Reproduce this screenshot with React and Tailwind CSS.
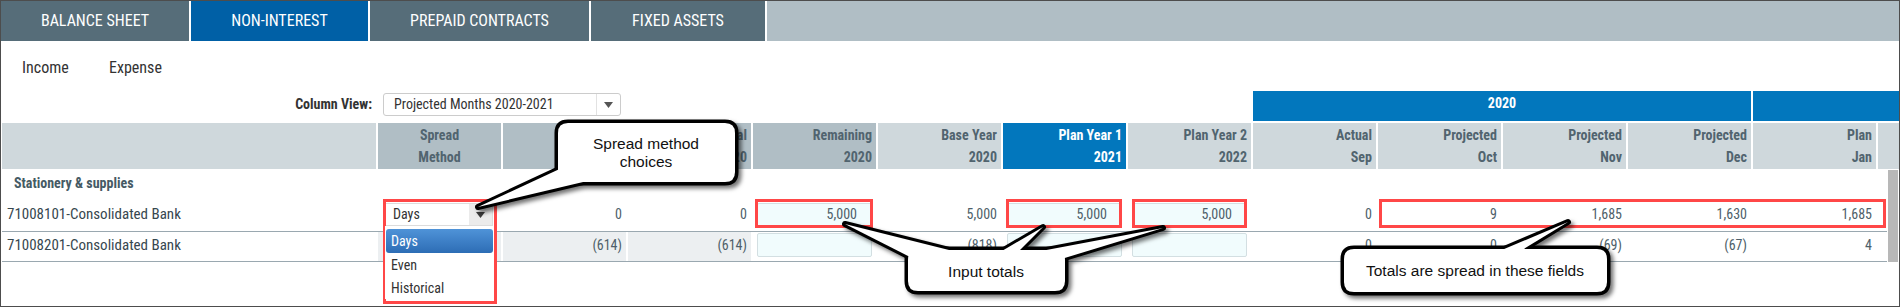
import React from 'react';

const DARK = 'bg-[#b0bec5]';
const LIGHT = 'bg-[#cfd8dc]';
const BLUE = 'bg-[#0277bd]';

const tabs = [
  { label: 'BALANCE SHEET', width: 'w-[188px]' },
  { label: 'NON-INTEREST', width: 'w-[177px]', active: true },
  { label: 'PREPAID CONTRACTS', width: 'w-[219px]' },
  { label: 'FIXED ASSETS', width: 'w-[174px]' },
];

const columns = [
  { key: 'spread', top: 'Spread', bottom: 'Method', bg: DARK, center: true },
  { key: 'budget', top: 'Budget', bottom: '2020', bg: DARK },
  { key: 'actual', top: 'Actual', bottom: '2020', bg: DARK },
  { key: 'remaining', top: 'Remaining', bottom: '2020', bg: DARK, input: true },
  { key: 'base', top: 'Base Year', bottom: '2020', bg: LIGHT },
  { key: 'py1', top: 'Plan Year 1', bottom: '2021', bg: BLUE, input: true },
  { key: 'py2', top: 'Plan Year 2', bottom: '2022', bg: LIGHT, input: true },
  { key: 'sep', top: 'Actual', bottom: 'Sep', bg: LIGHT },
  { key: 'oct', top: 'Projected', bottom: 'Oct', bg: LIGHT },
  { key: 'nov', top: 'Projected', bottom: 'Nov', bg: LIGHT },
  { key: 'dec', top: 'Projected', bottom: 'Dec', bg: LIGHT },
  { key: 'jan', top: 'Plan', bottom: 'Jan', bg: LIGHT },
  { key: 'feb', top: 'Plan', bottom: 'Feb', bg: LIGHT },
];

const rows = [
  {
    name: '71008101-Consolidated Bank',
    pad: 'pb-[2px]',
    height: 'h-[32px]',
    values: { budget: '0', actual: '0', remaining: '5,000', base: '5,000', py1: '5,000', py2: '5,000', sep: '0', oct: '9', nov: '1,685', dec: '1,630', jan: '1,685' },
  },
  {
    name: '71008201-Consolidated Bank',
    pad: 'pb-[3px]',
    height: 'h-[30px]',
    shaded: true,
    values: { budget: '(614)', actual: '(614)', remaining: '', base: '(818)', py1: '', py2: '', sep: '0', oct: '0', nov: '(69)', dec: '(67)', jan: '4' },
  },
];

const bubbles = [
  {
    rect: [558, 123, 177, 59],
    tails: [[[478, 207], [566, 166], [600, 178]]],
    lines: ['Spread method', 'choices'],
    cx: 646,
    ys: [149, 167],
  },
  {
    rect: [908, 250, 157, 41],
    tails: [
      [[845, 224], [912, 258], [965, 254]],
      [[1043, 227], [990, 258], [1012, 258]],
      [[1163, 228], [1020, 255], [1045, 264]],
    ],
    lines: ['Input totals'],
    cx: 986,
    ys: [277],
  },
  {
    rect: [1344, 249, 263, 43],
    tails: [[[1568, 222], [1483, 258], [1509, 258]]],
    lines: ['Totals are spread in these fields'],
    cx: 1475,
    ys: [276],
  },
];

const redBoxes = [
  [384.5, 200.5, 111, 102],
  [756.5, 200.5, 115, 26],
  [1007.5, 200.5, 113, 26],
  [1133.5, 200.5, 112, 26],
  [1380.5, 200.5, 504, 26],
];

const Caret = ({ color = '#3c3c3c' }) => (
  <svg width="9" height="6" viewBox="0 0 9 6">
    <path d="M0 0h9L4.5 6z" fill={color} />
  </svg>
);

const roundRect = ([x, y, w, h], r = 10) =>
  `M${x + r} ${y}H${x + w - r}Q${x + w} ${y} ${x + w} ${y + r}V${y + h - r}Q${x + w} ${y + h} ${x + w - r} ${y + h}H${x + r}Q${x} ${y + h} ${x} ${y + h - r}V${y + r}Q${x} ${y} ${x + r} ${y}Z`;

const tri = (pts) => `M${pts.map((p) => p.join(' ')).join('L')}Z`;

const SpreadSelect = () => (
  <div className="relative ml-[7px] w-[108px] h-[23px] flex bg-white border border-[#dcdcdc]">
    <span className="flex-1 pl-[7px] flex items-center text-[#333]">Days</span>
    <span className="w-[23px] bg-[#ebebeb] flex items-center justify-center">
      <Caret />
    </span>
    <div className="absolute left-[-1px] top-[22px] w-[109px] bg-white pt-[3px] px-px z-10">
      <div className="h-[24px] rounded-[3px] bg-linear-to-b from-[#4f93d8] to-[#2d6db5] text-white flex items-center pl-[5px]">Days</div>
      <div className="h-[24px] flex items-center pl-[5px] text-[#333]">Even</div>
      <div className="h-[22px] flex items-center pl-[5px] text-[#333]">Historical</div>
    </div>
  </div>
);

const BodyCell = ({ col, row, first }) => {
  const value = row.values[col.key];
  const shaded = row.shaded && ['spread', 'budget', 'actual'].includes(col.key);
  const base = `w-[123px] shrink-0 flex items-center ${row.pad} ${shaded ? 'bg-[#eceff1]' : ''}`;

  if (col.key === 'spread') {
    return <div className={base}>{first && <SpreadSelect />}</div>;
  }
  if (col.input) {
    return (
      <div className={`${base} px-1`}>
        <div className="h-[24px] w-full bg-[#f1fcfd] border border-[#d3dfe2] rounded-[2px] flex items-center justify-end pr-[14px]">
          {value}
        </div>
      </div>
    );
  }
  return <div className={`${base} justify-end pr-1`}>{value}</div>;
};

export default function App() {
  return (
    <div className="relative w-[1900px] h-[307px] bg-white overflow-hidden font-['Roboto_Condensed',Roboto,Arial,sans-serif] text-[14px]">
      <div className="w-full h-full border border-[#4d4d4d] flex flex-col overflow-hidden">
        {/* tabs */}
        <div className="flex gap-[2px] h-[40px] shrink-0">
          {tabs.map((tab) => (
            <div
              key={tab.label}
              className={`${tab.width} shrink-0 flex items-center justify-center text-white text-[16px] ${tab.active ? 'bg-[#0060a6]' : 'bg-[#566d79]'}`}
            >
              {tab.label}
            </div>
          ))}
          <div className="flex-1 bg-[#b0bec5]" />
        </div>

        {/* income / expense */}
        <div className="h-[50px] pt-1 flex items-center pl-[21px] text-[16px] text-[#333] shrink-0">
          <span className="w-[87px]">Income</span>
          <span>Expense</span>
        </div>

        {/* column view + year groups */}
        <div className="flex gap-[2px] pl-px h-[30px] shrink-0">
          <div className="w-[1249px] shrink-0 flex items-start pt-[2px]">
            <div className="w-[370px] text-right font-bold leading-[23px] text-[#333]">Column View:</div>
            <div className="ml-[11px] w-[238px] h-[23px] border border-[#cccccc] rounded-[3px] flex bg-white">
              <span className="flex-1 pl-[10px] flex items-center text-[#333]">Projected Months 2020-2021</span>
              <span className="w-[24px] border-l border-[#e2e2e2] flex items-center justify-center">
                <Caret color="#555" />
              </span>
            </div>
          </div>
          <div className={`w-[498px] shrink-0 ${BLUE} text-white font-bold text-center pt-[2px] leading-[20px]`}>2020</div>
          <div className={`flex-1 ${BLUE}`} />
        </div>

        {/* column headers */}
        <div className="flex gap-[2px] pl-px mt-[2px] h-[46px] shrink-0">
          <div className={`w-[374px] shrink-0 ${LIGHT}`} />
          {columns.map((col) => (
            <div
              key={col.key}
              className={`w-[123px] shrink-0 ${col.bg} pt-px leading-[22px] font-bold ${col.center ? 'text-center' : 'text-right pr-1'} ${col.bg === BLUE ? 'text-white' : 'text-[#51646f]'}`}
            >
              <div>{col.top}</div>
              <div>{col.bottom}</div>
            </div>
          ))}
        </div>

        {/* body */}
        <div className="flex shrink-0">
          <div className="w-[1885px] ml-px overflow-x-clip">
            <div className="h-[31px] flex items-center pb-[3px] pl-[12px] font-bold text-[#455a64]">Stationery &amp; supplies</div>
            {rows.map((row, i) => (
              <div key={row.name} className={`flex gap-[2px] ${row.height} border-b border-[#9aa8b0] text-[#4e5f6a]`}>
                <div className={`w-[374px] shrink-0 flex items-center pl-[5px] text-[15px] text-[#37474f] ${row.pad}`}>{row.name}</div>
                {columns.map((col) => (
                  <BodyCell key={col.key} col={col} row={row} first={i === 0} />
                ))}
              </div>
            ))}
          </div>
          <div className="ml-px mt-px w-[10px] h-[92px] bg-[#b8b8b8]" />
        </div>
      </div>

      {/* annotations */}
      <svg className="absolute inset-0 pointer-events-none" width="1900" height="307" viewBox="0 0 1900 307">
        <defs>
          <filter id="bubble-shadow" x="-10%" y="-20%" width="130%" height="160%">
            <feDropShadow dx="3" dy="3" stdDeviation="2" floodColor="#000" floodOpacity="0.55" />
          </filter>
        </defs>
        {redBoxes.map(([x, y, w, h], i) => (
          <rect key={i} x={x} y={y} width={w} height={h} fill="none" stroke="#ff4747" strokeWidth="3" />
        ))}
        {bubbles.map((b, i) => (
          <g key={i}>
            <g filter="url(#bubble-shadow)">
              <path d={roundRect(b.rect)} fill="#fff" stroke="#000" strokeWidth="7" strokeLinejoin="round" />
              {b.tails.map((t, j) => (
                <path key={j} d={tri(t)} fill="#fff" stroke="#000" strokeWidth="6" strokeLinejoin="round" />
              ))}
            </g>
            <path d={roundRect(b.rect)} fill="#fff" />
            {b.tails.map((t, j) => (
              <path key={j} d={tri(t)} fill="#fff" />
            ))}
            {b.lines.map((line, j) => (
              <text
                key={j}
                x={b.cx}
                y={b.ys[j]}
                textAnchor="middle"
                fontSize="15.5"
                fontFamily="'Liberation Sans', Arial, sans-serif"
                fill="#111"
              >
                {line}
              </text>
            ))}
          </g>
        ))}
      </svg>
    </div>
  );
}
